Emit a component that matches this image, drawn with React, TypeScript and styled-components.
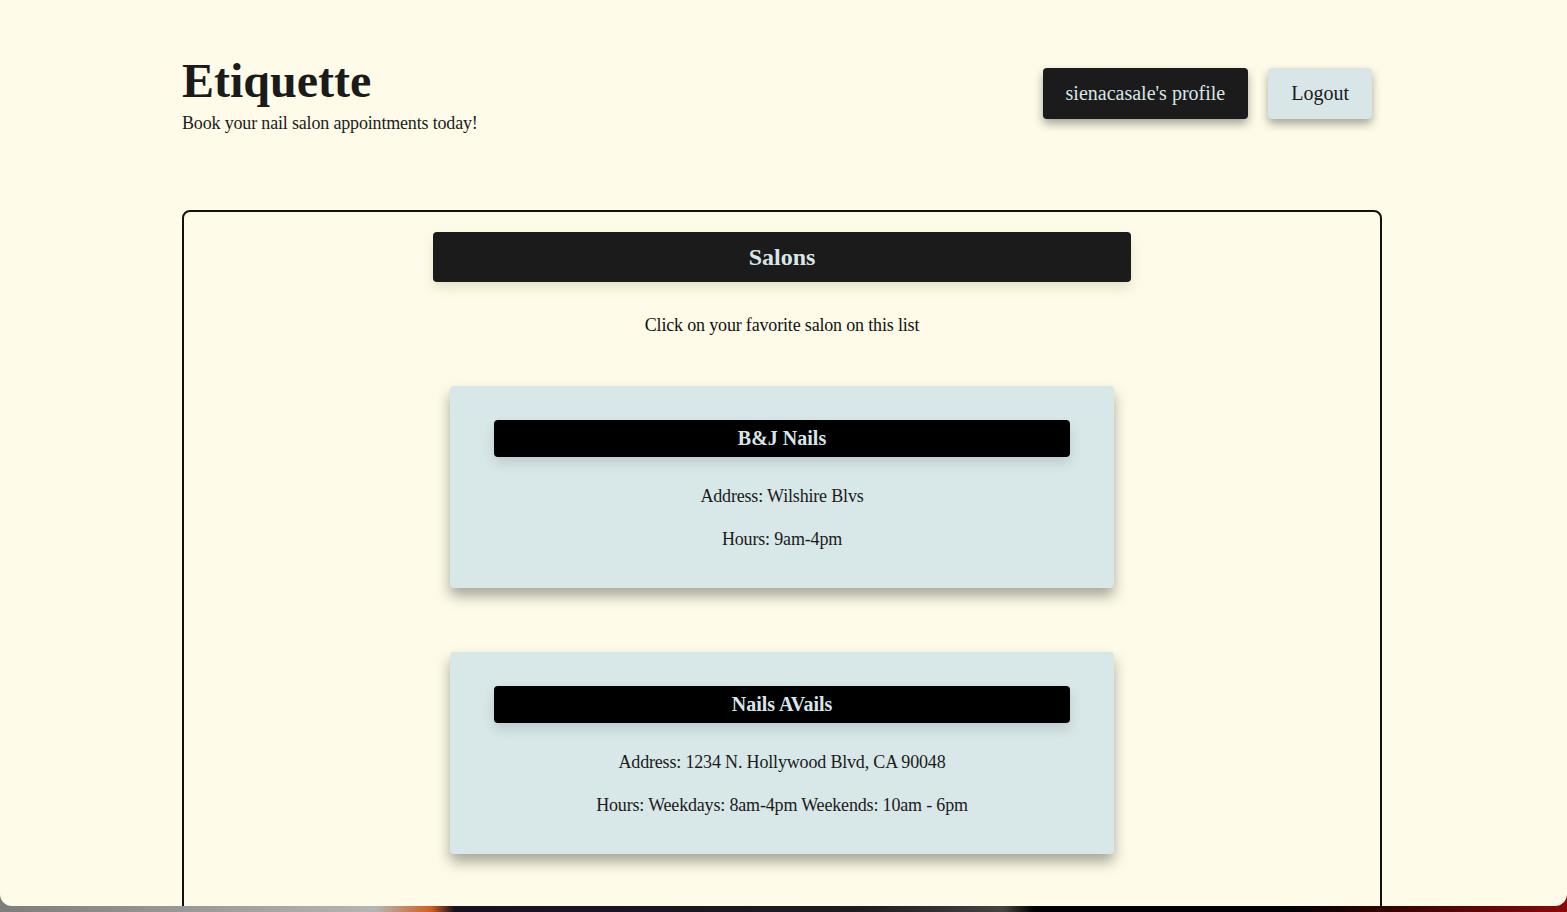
import React from "react";
import styled, { createGlobalStyle } from "styled-components";

const Global = createGlobalStyle`
  html, body { margin: 0; padding: 0; }
  body {
    background: linear-gradient(90deg, #7d7d7d 0%, #b5b5b5 24%, #d06020 27.5%, #1a1020 29%, #1c1c22 55%, #444 64%, #000 66%, #000 82%, #8a0a0a 100%);
    font-family: "Liberation Serif", "Times New Roman", serif;
    color: #1b1b1b;
  }
`;

const Frame = styled.div`
  height: 906px;
  overflow: hidden;
  background: #fefce8;
  border-radius: 0 0 12px 12px;
`;

const Page = styled.div`
  width: 1200px;
  margin-left: 182px;
  padding-top: 57px;
`;

const Header = styled.header`
  display: flex;
  justify-content: space-between;
  align-items: flex-start;
  padding-right: 10px;
`;

const Brand = styled.div`
  display: flex;
  flex-direction: column;
`;

const Title = styled.h1`
  margin: 0;
  font-size: 48px;
  line-height: 48px;
  font-weight: 700;
  color: #1b1b1b;
`;

const Tagline = styled.p`
  margin: 7px 0 0;
  font-size: 18px;
  line-height: 22px;
  letter-spacing: -0.17px;
  color: #1b1b1b;
`;

const Actions = styled.nav`
  display: flex;
  gap: 20px;
  margin-top: 11px;
`;

const Button = styled.button<{ $dark?: boolean }>`
  height: 51px;
  padding: 0 23px;
  border: none;
  border-radius: 4px;
  font-family: "Liberation Serif", "Times New Roman", serif;
  font-size: 20px;
  background: ${(p) => (p.$dark ? "#1b1b1b" : "#d8e6e8")};
  color: ${(p) => (p.$dark ? "#d8e6e8" : "#1b1b1b")};
  box-shadow: 0 5px 10px rgba(0, 0, 0, 0.35);
  cursor: pointer;
`;

const Panel = styled.main`
  margin-top: 76px;
  border: 2px solid #111;
  border-radius: 8px;
  padding: 20px 0 80px;
  display: flex;
  flex-direction: column;
  align-items: center;
`;

const SectionBar = styled.h2`
  margin: 0;
  width: 698px;
  height: 50px;
  display: flex;
  align-items: center;
  justify-content: center;
  background: #1b1b1b;
  color: #d8e6e8;
  font-size: 24px;
  font-weight: 700;
  border-radius: 4px;
  box-shadow: 0 6px 12px rgba(120, 110, 60, 0.18);
`;

const Hint = styled.p`
  margin: 31px 0 49px;
  font-size: 18px;
  line-height: 24px;
  letter-spacing: -0.17px;
  color: #111;
`;

const List = styled.div`
  display: flex;
  flex-direction: column;
  gap: 64px;
`;

const Card = styled.div`
  width: 664px;
  box-sizing: border-box;
  padding: 34px 44px 37px;
  background: #d8e7e8;
  border-radius: 4px;
  box-shadow: 0 8px 14px rgba(0, 0, 0, 0.35);
  text-align: center;
`;

const CardTitle = styled.h3`
  margin: 0 0 27px;
  height: 37px;
  display: flex;
  align-items: center;
  justify-content: center;
  background: #000;
  color: #d8e6e8;
  font-size: 20px;
  font-weight: 700;
  border-radius: 4px;
  box-shadow: 0 6px 12px rgba(60, 90, 95, 0.18);
`;

const Line = styled.p`
  margin: 0;
  font-size: 18px;
  line-height: 24px;
  letter-spacing: -0.17px;
  color: #1b1b1b;
  & + & {
    margin-top: 19px;
  }
`;

const salons = [
  { name: "B&J Nails", address: "Wilshire Blvs", hours: "9am-4pm" },
  {
    name: "Nails AVails",
    address: "1234 N. Hollywood Blvd, CA 90048",
    hours: "Weekdays: 8am-4pm Weekends: 10am - 6pm",
  },
];

export default function App() {
  return (
    <>
      <Global />
      <Frame>
        <Page>
          <Header>
            <Brand>
              <Title>Etiquette</Title>
              <Tagline>Book your nail salon appointments today!</Tagline>
            </Brand>
            <Actions>
              <Button $dark>sienacasale's profile</Button>
              <Button>Logout</Button>
            </Actions>
          </Header>
          <Panel>
            <SectionBar>Salons</SectionBar>
            <Hint>Click on your favorite salon on this list</Hint>
            <List>
              {salons.map((s) => (
                <Card key={s.name}>
                  <CardTitle>{s.name}</CardTitle>
                  <Line>Address: {s.address}</Line>
                  <Line>Hours: {s.hours}</Line>
                </Card>
              ))}
            </List>
          </Panel>
        </Page>
      </Frame>
    </>
  );
}
